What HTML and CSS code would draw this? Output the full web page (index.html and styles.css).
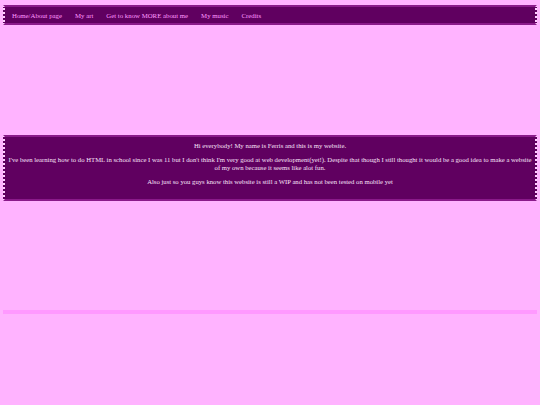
FILE: index.html
```html
<!DOCTYPE html>
<html lang="en">
<head>
  <meta charset="UTF-8" />
  <title>Ferris's website</title>
  <link rel="stylesheet" href="styles.css">
</head>
<body>
  <nav class="topnav">
    <a href="#">Home/About page</a>
    <a href="#">My art</a>
    <a href="#">Get to know MORE about me</a>
    <a href="#">My music</a>
    <a href="#">Credits</a>
  </nav>

  <div class="intro">
    <p>Hi everybody! My name is Ferris and this is my website.</p>
    <p>I've been learning how to do HTML in school since I was 11 but I don't think I'm very good at web development(yet!). Despite that though I still thought it would be a good idea to make a website of my own because it seems like alot fun.</p>
    <p>Also just so you guys know this website is still a WIP and has not been tested on mobile yet</p>
  </div>

  <footer class="bottom"></footer>
</body>
</html>
```

FILE: styles.css
```css
body {
  background: #ffb3ff;
  margin: 0;
  padding: 5px 3px;
  font-family: "Liberation Serif", serif;
  font-size: 6.8px;
}
.topnav {
  background: #600060;
  border-style: solid dotted;
  border-width: 2px;
  border-color: #8a1a8a #ffd0ff;
  height: 16px;
  display: flex;
  align-items: center;
  gap: 13px;
  padding-left: 7px;
}
.topnav a {
  color: #ff99ff;
  text-decoration: none;
}
.intro {
  margin-top: 110px;
  background: #600060;
  border-style: solid dotted;
  border-width: 2px;
  border-color: #8a1a8a #ffd0ff;
  color: #f8e0f8;
  text-align: center;
  padding: 5px 0 13px;
  line-height: 8px;
  font-size: 6.7px;
}
.intro p {
  margin: 0 0 6px;
}
.intro p:last-child {
  margin-bottom: 0;
}
.bottom {
  margin-top: 109px;
  height: 4px;
  background: #ff99ff;
}
```
